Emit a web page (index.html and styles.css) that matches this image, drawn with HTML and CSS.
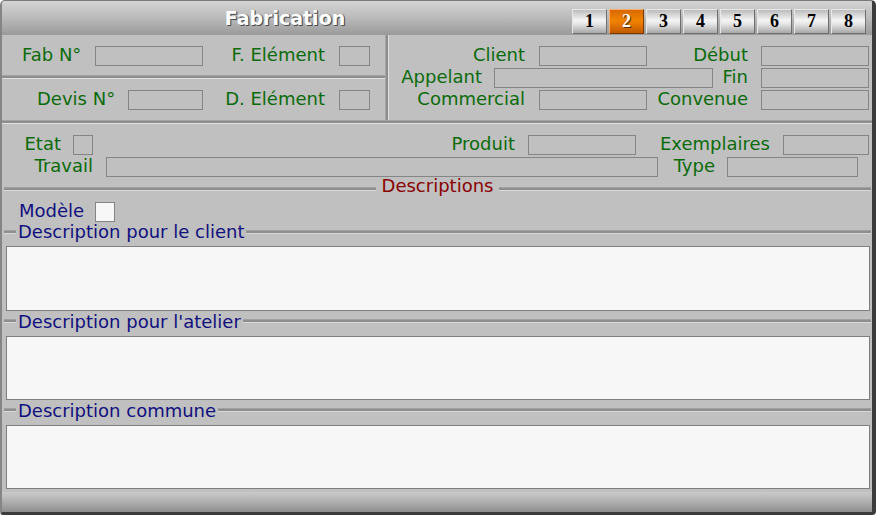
FILE: index.html
```html
<!DOCTYPE html>
<html lang="fr">
<head>
<meta charset="utf-8">
<title>Fabrication</title>
<link rel="stylesheet" href="styles.css">
</head>
<body>
<div class="window">
  <div class="titlebar">
    <div class="title">Fabrication</div>
    <div class="tabs">
      <div class="tab">1</div>
      <div class="tab active">2</div>
      <div class="tab">3</div>
      <div class="tab">4</div>
      <div class="tab">5</div>
      <div class="tab">6</div>
      <div class="tab">7</div>
      <div class="tab">8</div>
    </div>
  </div>

  <div class="top">
    <div class="top-left">
      <div class="row row-a">
        <span class="lbl l-fab">Fab N°</span>
        <span class="box w108"></span>
        <span class="lbl rt l-elem">F. Elément</span>
        <span class="box w31"></span>
      </div>
      <div class="hgroove"></div>
      <div class="row row-a">
        <span class="lbl l-devis">Devis N°</span>
        <span class="box w75"></span>
        <span class="lbl rt l-elem">D. Elément</span>
        <span class="box w31"></span>
      </div>
    </div>
    <div class="vgroove"></div>
    <div class="top-right">
      <div class="row">
        <span class="lbl rt l-client">Client</span>
        <span class="box w108"></span>
        <span class="lbl rt l-debut">Début</span>
        <span class="box w108"></span>
      </div>
      <div class="row">
        <span class="lbl rt l-appelant">Appelant</span>
        <span class="box w219"></span>
        <span class="lbl rt l-fin">Fin</span>
        <span class="box w108"></span>
      </div>
      <div class="row">
        <span class="lbl rt l-client">Commercial</span>
        <span class="box w108"></span>
        <span class="lbl rt l-debut">Convenue</span>
        <span class="box w108"></span>
      </div>
    </div>
  </div>
  <div class="hgroove"></div>

  <div class="mid">
    <div class="row">
      <span class="lbl rt l-etat">Etat</span>
      <span class="box w20"></span>
      <span class="lbl rt l-produit">Produit</span>
      <span class="box w108"></span>
      <span class="lbl rt l-exemp">Exemplaires</span>
      <span class="box w86"></span>
    </div>
    <div class="row">
      <span class="lbl rt l-travail">Travail</span>
      <span class="box w552"></span>
      <span class="lbl rt l-type">Type</span>
      <span class="box w131"></span>
    </div>
  </div>

  <div class="section-head">
    <span class="sline"></span>
    <span class="head-text">Descriptions</span>
    <span class="sline"></span>
  </div>

  <div class="modele-row">
    <span class="lbl navy l-modele">Modèle</span>
    <span class="check"></span>
  </div>

  <div class="legend first">
    <span class="lline short"></span>
    <span class="legend-text">Description pour le client</span>
    <span class="lline"></span>
  </div>
  <div class="ta ta-first"></div>

  <div class="legend">
    <span class="lline short"></span>
    <span class="legend-text">Description pour l'atelier</span>
    <span class="lline"></span>
  </div>
  <div class="ta"></div>

  <div class="legend">
    <span class="lline short"></span>
    <span class="legend-text">Description commune</span>
    <span class="lline"></span>
  </div>
  <div class="ta"></div>

  <div class="spacer"></div>
  <div class="bottombar"></div>
</div>
</body>
</html>
```

FILE: styles.css
```css
* { box-sizing: border-box; }

html, body {
  margin: 0;
  padding: 0;
  background: #ffffff;
}

body {
  font-family: "DejaVu Sans", Verdana, sans-serif;
  font-size: 18px;
}

.window {
  width: 876px;
  height: 515px;
  display: flex;
  flex-direction: column;
  background: #c0c0c0;
  border-left: 2px solid #858585;
  border-top: 1px solid #7a7a7a;
  border-right: 4px solid #3c3c3c;
  border-bottom: 3px solid #3c3c3c;
  border-radius: 5px 5px 4px 3px;
  overflow: hidden;
}

/* ---------- title bar ---------- */
.titlebar {
  height: 34px;
  flex: none;
  display: flex;
  align-items: flex-start;
  background: linear-gradient(#d4d4d4 0%, #bdbdbd 45%, #9a9a9a 100%);
}

.title {
  flex: 1;
  height: 34px;
  line-height: 34px;
  text-align: center;
  color: #ffffff;
  font-weight: bold;
  font-size: 19px;
  text-shadow: 1px 1px 0 #4a4a4a, 1px 0 0 #6a6a6a;
}

.tabs {
  display: flex;
  gap: 2px;
  margin: 8px 6px 0 4px;
}

.tab {
  width: 35px;
  height: 25px;
  line-height: 23px;
  text-align: center;
  font-family: "Liberation Serif", "Times New Roman", serif;
  font-weight: bold;
  font-size: 18px;
  color: #000000;
  border: 1px solid;
  border-color: #e8e8e8 #6e6e6e #6e6e6e #e8e8e8;
  background: linear-gradient(#bcbcbc 0%, #f4f4f4 45%, #e6e6e6 60%, #a8a8a8 100%);
}

.tab.active {
  color: #ffffff;
  text-shadow: 1px 1px 0 #5a2a00;
  border-color: #f5b070 #7a3a00 #7a3a00 #f5b070;
  background: linear-gradient(#d86800 0%, #f08400 45%, #e87800 60%, #c05a00 100%);
}

/* ---------- generic rows ---------- */
.row {
  display: flex;
  align-items: flex-start;
  height: 20px;
}

.lbl {
  flex: none;
  color: #0b6b0b;
  height: 20px;
  line-height: 18px;
  padding-bottom: 2px;
  white-space: nowrap;
}

.lbl.rt { text-align: right; }
.lbl.navy { color: #10107e; }

.box {
  flex: none;
  height: 20px;
  border: 1px solid #858585;
}

.w20 { width: 20px; }
.w31 { width: 31px; }
.w75 { width: 75px; }
.w86 { width: 86px; }
.w108 { width: 108px; }
.w131 { width: 131px; }
.w219 { width: 219px; }
.w552 { width: 552px; }

/* ---------- grooves ---------- */
.hgroove {
  flex: none;
  height: 4px;
  background: linear-gradient(#a2a2a2 0 1px, #8e8e8e 1px 3px, #e2e2e2 3px 4px);
}

.vgroove {
  flex: none;
  width: 4px;
  background: linear-gradient(90deg, #a8a8a8 0 1px, #8c8c8c 1px 3px, #e2e2e2 3px 4px);
}

/* ---------- top section ---------- */
.top {
  flex: none;
  height: 85px;
  display: flex;
}

.top-left {
  width: 383px;
  flex: none;
  display: flex;
  flex-direction: column;
}

.row-a { margin-top: 11px; }
.top-left .hgroove { margin-top: 9px; }

.l-fab { width: 93px; padding-left: 20px; }
.l-devis { width: 126px; padding-left: 35px; }
.l-elem { width: 136px; padding-right: 14px; }

.top-right {
  flex: 1;
  display: flex;
  flex-direction: column;
  gap: 2px;
  padding-top: 11px;
}

.l-client { width: 150px; padding-right: 14px; }
.l-debut { width: 114px; padding-right: 13px; }
.l-appelant { width: 105px; padding-right: 12px; }
.l-fin { width: 48px; padding-right: 13px; }

/* ---------- middle section ---------- */
.mid {
  flex: none;
  display: flex;
  flex-direction: column;
  gap: 2px;
  padding-top: 11px;
}

.l-etat { width: 71px; padding-right: 12px; }
.l-produit { width: 435px; padding-right: 13px; }
.l-exemp { width: 147px; padding-right: 13px; }
.l-travail { width: 104px; padding-right: 13px; }
.l-type { width: 69px; padding-right: 12px; }

/* ---------- descriptions heading ---------- */
.section-head {
  flex: none;
  height: 18px;
  display: flex;
  align-items: flex-start;
  padding: 0 1px 0 2px;
}

.sline {
  flex: 1;
  height: 4px;
  margin-top: 10px;
  background: linear-gradient(#a0a0a0 0 1px, #8e8e8e 1px 3px, #d8d8d8 3px 4px);
}

.head-text {
  flex: none;
  padding: 0 6px;
  line-height: 18px;
  color: #8a0000;
}

.modele-row {
  flex: none;
  display: flex;
  align-items: flex-start;
  height: 20px;
  margin-top: 7px;
}

.l-modele { width: 93px; padding-left: 17px; }

.check {
  flex: none;
  width: 20px;
  height: 20px;
  background: #f7f7f7;
  border: 1px solid #858585;
}

/* ---------- legends & text areas ---------- */
.legend {
  flex: none;
  height: 18px;
  margin-top: 2px;
  display: flex;
  align-items: flex-start;
  padding: 0 1px 0 2px;
}

.legend.first { margin-top: 1px; }

.lline {
  flex: 1;
  height: 4px;
  margin-top: 6px;
  background: linear-gradient(#a0a0a0 0 1px, #8e8e8e 1px 3px, #d8d8d8 3px 4px);
}

.legend.first .lline { margin-top: 7px; }

.lline.short {
  flex: none;
  width: 12px;
}

.legend-text {
  flex: none;
  padding: 0 2px;
  line-height: 18px;
  color: #10107e;
}

.ta {
  flex: none;
  height: 64px;
  margin: 5px 2px 0 4px;
  background: #f7f7f7;
  border: 1px solid #7f7f7f;
}

.ta.ta-first { height: 65px; }

.spacer { flex: 1; }

.bottombar {
  flex: none;
  height: 20px;
  background: linear-gradient(#cacaca 0%, #b4b4b4 40%, #8e8e8e 100%);
}
```
